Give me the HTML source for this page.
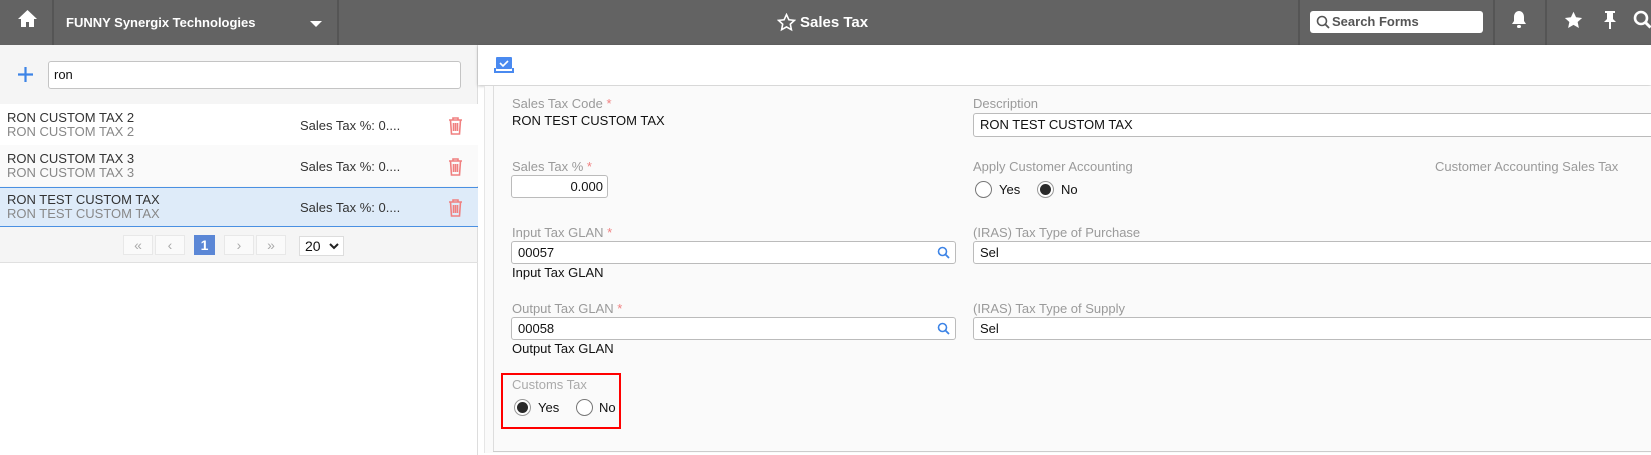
<!DOCTYPE html>
<html><head><meta charset="utf-8"><style>
*{box-sizing:border-box;margin:0;padding:0}
body{width:1651px;height:455px;overflow:hidden;background:#fff;font-family:"Liberation Sans",Arial,sans-serif;font-size:13px;color:#222;position:relative}
.a{position:absolute}
.top{left:0;top:0;width:1651px;height:45px;background:#636363}
.vd{top:0;width:2px;height:45px;background:#555}
.w{color:#fff;font-weight:bold}
.lbl{color:#9a9a9a;font-size:13px;line-height:15px}
.req{color:#f08080}
.inp{background:#fff;border:1px solid #bbb;border-radius:3px;height:23px;line-height:21px;padding-left:6px;font-size:13px;color:#111}
.row{left:0;width:478px;height:41px}
.t1{color:#333;font-size:13px;line-height:15px}
.t2{color:#888;font-size:13px;line-height:15px}
.rad{width:17px;height:17px;border:1px solid #777;border-radius:50%;background:#fff}
.rad.on{border-color:#999}
.rad.on::after{content:"";position:absolute;left:2px;top:2px;width:11px;height:11px;border-radius:50%;background:#2a2a2a}
.pg{top:235px;height:20px;border:1px solid #e8e8e8;background:#fafafa;color:#aaa;text-align:center;line-height:18px;font-size:14px}
</style></head><body>
<div class="a top"></div>
<svg class="a" style="left:17px;top:9px" width="21" height="19" viewBox="0 0 21 19"><path d="M10.5 1L1 10h3v8h5v-5h3v5h5v-8h3z" fill="#fff"/></svg>
<div class="a vd" style="left:52px"></div>
<div class="a w" style="left:66px;top:15px;font-size:13px">FUNNY Synergix Technologies</div>
<svg class="a" style="left:309px;top:20px" width="14" height="8"><path d="M1 1h12L7 7z" fill="#fff"/></svg>
<div class="a vd" style="left:337px"></div>
<svg class="a" style="left:777px;top:13px" width="19" height="19" viewBox="0 0 24 24"><path d="M12 2l3 6.5 7 .8-5.2 4.8 1.4 7L12 17.6 5.8 21.1l1.4-7L2 9.3l7-.8z" fill="none" stroke="#fff" stroke-width="2"/></svg>
<div class="a w" style="left:800px;top:14px;font-size:15px">Sales Tax</div>
<div class="a vd" style="left:1298px"></div>
<div class="a" style="left:1310px;top:11px;width:173px;height:22px;background:#fff;border-radius:3px"></div>
<svg class="a" style="left:1316px;top:15px" width="14" height="14"><circle cx="6" cy="6" r="4.5" fill="none" stroke="#555" stroke-width="1.6"/><path d="M9.5 9.5l3.5 3.5" stroke="#555" stroke-width="1.8"/></svg>
<div class="a" style="left:1332px;top:14px;color:#555;font-weight:bold;font-size:13px">Search Forms</div>
<div class="a vd" style="left:1493px"></div>
<svg class="a" style="left:1511px;top:10px" width="16" height="19" viewBox="0 0 16 19"><path d="M8 1c-3 0-5 2.5-5 6v4L1 14h14l-2-3V7c0-3.5-2-6-5-6z" fill="#fff"/><rect x="6" y="15" width="4" height="3" rx="1.5" fill="#fff"/></svg>
<div class="a vd" style="left:1545px"></div>
<svg class="a" style="left:1564px;top:11px" width="19" height="18" viewBox="0 0 24 23"><path d="M12 1l3.3 7 7.7.9-5.7 5.2 1.6 7.6L12 17.8 5.1 21.7l1.6-7.6L1 8.9l7.7-.9z" fill="#fff"/></svg>
<svg class="a" style="left:1603px;top:10px" width="14" height="20" viewBox="0 0 14 20"><path d="M2 1h10v2H10v6l3 3H1l3-3V3H2z" fill="#fff"/><rect x="6" y="12" width="2" height="7" fill="#fff"/></svg>
<svg class="a" style="left:1633px;top:10px" width="20" height="20"><circle cx="8" cy="8" r="6" fill="none" stroke="#fff" stroke-width="2.6"/><path d="M12.5 12.5l5 5" stroke="#fff" stroke-width="3"/></svg>

<div class="a" style="left:0;top:45px;width:478px;height:217px;background:#f5f5f5"></div>
<div class="a" style="left:477px;top:45px;width:1px;height:410px;background:#ddd"></div>
<div class="a" style="left:0;top:262px;width:478px;height:1px;background:#e0e0e0"></div>
<svg class="a" style="left:17px;top:66px" width="17" height="17"><path d="M8.5 1v15M1 8.5h15" stroke="#3d84e6" stroke-width="2.2"/></svg>
<div class="a inp" style="left:48px;top:61px;width:413px;height:28px;line-height:26px;border-color:#c4c4c4;padding-left:5px">ron</div>
<div class="a row" style="top:104px;background:#fff"></div>
<div class="a row" style="top:145px;background:#fafafa"></div>
<div class="a row" style="top:187px;height:40px;background:#deebf9;border-top:1px solid #4a90e2;border-bottom:1px solid #4a90e2"></div>
<div class="a t1" style="left:7px;top:110px">RON CUSTOM TAX 2</div>
<div class="a t2" style="left:7px;top:124px">RON CUSTOM TAX 2</div>
<div class="a t1" style="left:7px;top:151px">RON CUSTOM TAX 3</div>
<div class="a t2" style="left:7px;top:165px">RON CUSTOM TAX 3</div>
<div class="a t1" style="left:7px;top:192px">RON TEST CUSTOM TAX</div>
<div class="a t2" style="left:7px;top:206px">RON TEST CUSTOM TAX</div>
<div class="a t1" style="left:300px;top:118px">Sales Tax %: 0....</div>
<div class="a t1" style="left:300px;top:159px">Sales Tax %: 0....</div>
<div class="a t1" style="left:300px;top:200px">Sales Tax %: 0....</div>
<svg class="a" style="left:448px;top:116px" width="15" height="19" viewBox="0 0 15 19"><g fill="none" stroke="#f08080" stroke-width="1.6"><path d="M1 4h13M5 4V2h5v2M2.5 4l1 14h8l1-14M5.5 7v8M7.5 7v8M9.5 7v8"/></g></svg>
<svg class="a" style="left:448px;top:157px" width="15" height="19" viewBox="0 0 15 19"><g fill="none" stroke="#f08080" stroke-width="1.6"><path d="M1 4h13M5 4V2h5v2M2.5 4l1 14h8l1-14M5.5 7v8M7.5 7v8M9.5 7v8"/></g></svg>
<svg class="a" style="left:448px;top:198px" width="15" height="19" viewBox="0 0 15 19"><g fill="none" stroke="#f08080" stroke-width="1.6"><path d="M1 4h13M5 4V2h5v2M2.5 4l1 14h8l1-14M5.5 7v8M7.5 7v8M9.5 7v8"/></g></svg>
<div class="a pg" style="left:123px;width:30px">«</div>
<div class="a pg" style="left:155px;width:30px">‹</div>
<div class="a pg" style="left:194px;width:21px;background:#5b87d6;border-color:#5b87d6;color:#fff;font-weight:bold">1</div>
<div class="a pg" style="left:224px;width:30px">›</div>
<div class="a pg" style="left:256px;width:30px">»</div>
<div class="a" style="left:299px;top:236px;width:45px;height:20px;background:#fff;border:1px solid #ddd;font-size:14px;line-height:18px;padding-left:5px;color:#111">20</div>
<svg class="a" style="left:329px;top:243px" width="10" height="7"><path d="M1 1l4 4 4-4" fill="none" stroke="#222" stroke-width="2"/></svg>

<div class="a" style="left:478px;top:45px;width:1173px;height:40px;background:#fff;box-shadow:0 1px 3px rgba(0,0,0,.25)"></div>
<svg class="a" style="left:494px;top:57px" width="20" height="16" viewBox="0 0 20 16"><rect x="2" y="0" width="16" height="12" rx="1" fill="#4a8af0"/><path d="M0 11h2v3h16v-3h2v5H0z" fill="#4a8af0"/><path d="M6 6l3 3 5-5" fill="none" stroke="#fff" stroke-width="1.6"/></svg>
<div class="a" style="left:484px;top:86px;width:1167px;height:367px;background:#fafafa;border-left:1px solid #e6e6e6"></div>
<div class="a" style="left:493px;top:86px;width:1px;height:366px;background:#ddd"></div>
<div class="a" style="left:493px;top:451px;width:1158px;height:1px;background:#ccc"></div>

<div class="a lbl" style="left:512px;top:96px">Sales Tax Code <span class="req">*</span></div>
<div class="a" style="left:512px;top:113px;color:#111">RON TEST CUSTOM TAX</div>
<div class="a lbl" style="left:512px;top:159px">Sales Tax % <span class="req">*</span></div>
<div class="a inp" style="left:511px;top:175px;width:97px;text-align:right;padding-right:4px">0.000</div>
<div class="a lbl" style="left:512px;top:225px">Input Tax GLAN <span class="req">*</span></div>
<div class="a inp" style="left:511px;top:241px;width:445px">00057</div>
<svg class="a" style="left:937px;top:246px" width="13" height="13"><circle cx="5.5" cy="5.5" r="4" fill="none" stroke="#3d84e6" stroke-width="1.6"/><path d="M8.5 8.5l3.5 3.5" stroke="#3d84e6" stroke-width="1.8"/></svg>
<div class="a" style="left:512px;top:265px;color:#111">Input Tax GLAN</div>
<div class="a lbl" style="left:512px;top:301px">Output Tax GLAN <span class="req">*</span></div>
<div class="a inp" style="left:511px;top:317px;width:445px">00058</div>
<svg class="a" style="left:937px;top:322px" width="13" height="13"><circle cx="5.5" cy="5.5" r="4" fill="none" stroke="#3d84e6" stroke-width="1.6"/><path d="M8.5 8.5l3.5 3.5" stroke="#3d84e6" stroke-width="1.8"/></svg>
<div class="a" style="left:512px;top:341px;color:#111">Output Tax GLAN</div>

<div class="a" style="left:501px;top:373px;width:120px;height:56px;border:2px solid #f00"></div>
<div class="a lbl" style="left:512px;top:377px;color:#aaa">Customs Tax</div>
<div class="a rad on" style="left:514px;top:399px"></div>
<div class="a" style="left:538px;top:400px;color:#111">Yes</div>
<div class="a rad" style="left:576px;top:399px"></div>
<div class="a" style="left:599px;top:400px;color:#111">No</div>

<div class="a lbl" style="left:973px;top:96px">Description</div>
<div class="a inp" style="left:973px;top:113px;width:700px;height:24px">RON TEST CUSTOM TAX</div>
<div class="a lbl" style="left:973px;top:159px">Apply Customer Accounting</div>
<div class="a rad" style="left:975px;top:181px"></div>
<div class="a" style="left:999px;top:182px;color:#111">Yes</div>
<div class="a rad on" style="left:1037px;top:181px"></div>
<div class="a" style="left:1061px;top:182px;color:#111">No</div>
<div class="a lbl" style="left:1435px;top:159px">Customer Accounting Sales Tax</div>
<div class="a lbl" style="left:973px;top:225px">(IRAS) Tax Type of Purchase</div>
<div class="a inp" style="left:973px;top:241px;width:700px">Sel</div>
<div class="a lbl" style="left:973px;top:301px">(IRAS) Tax Type of Supply</div>
<div class="a inp" style="left:973px;top:317px;width:700px">Sel</div>
</body></html>
